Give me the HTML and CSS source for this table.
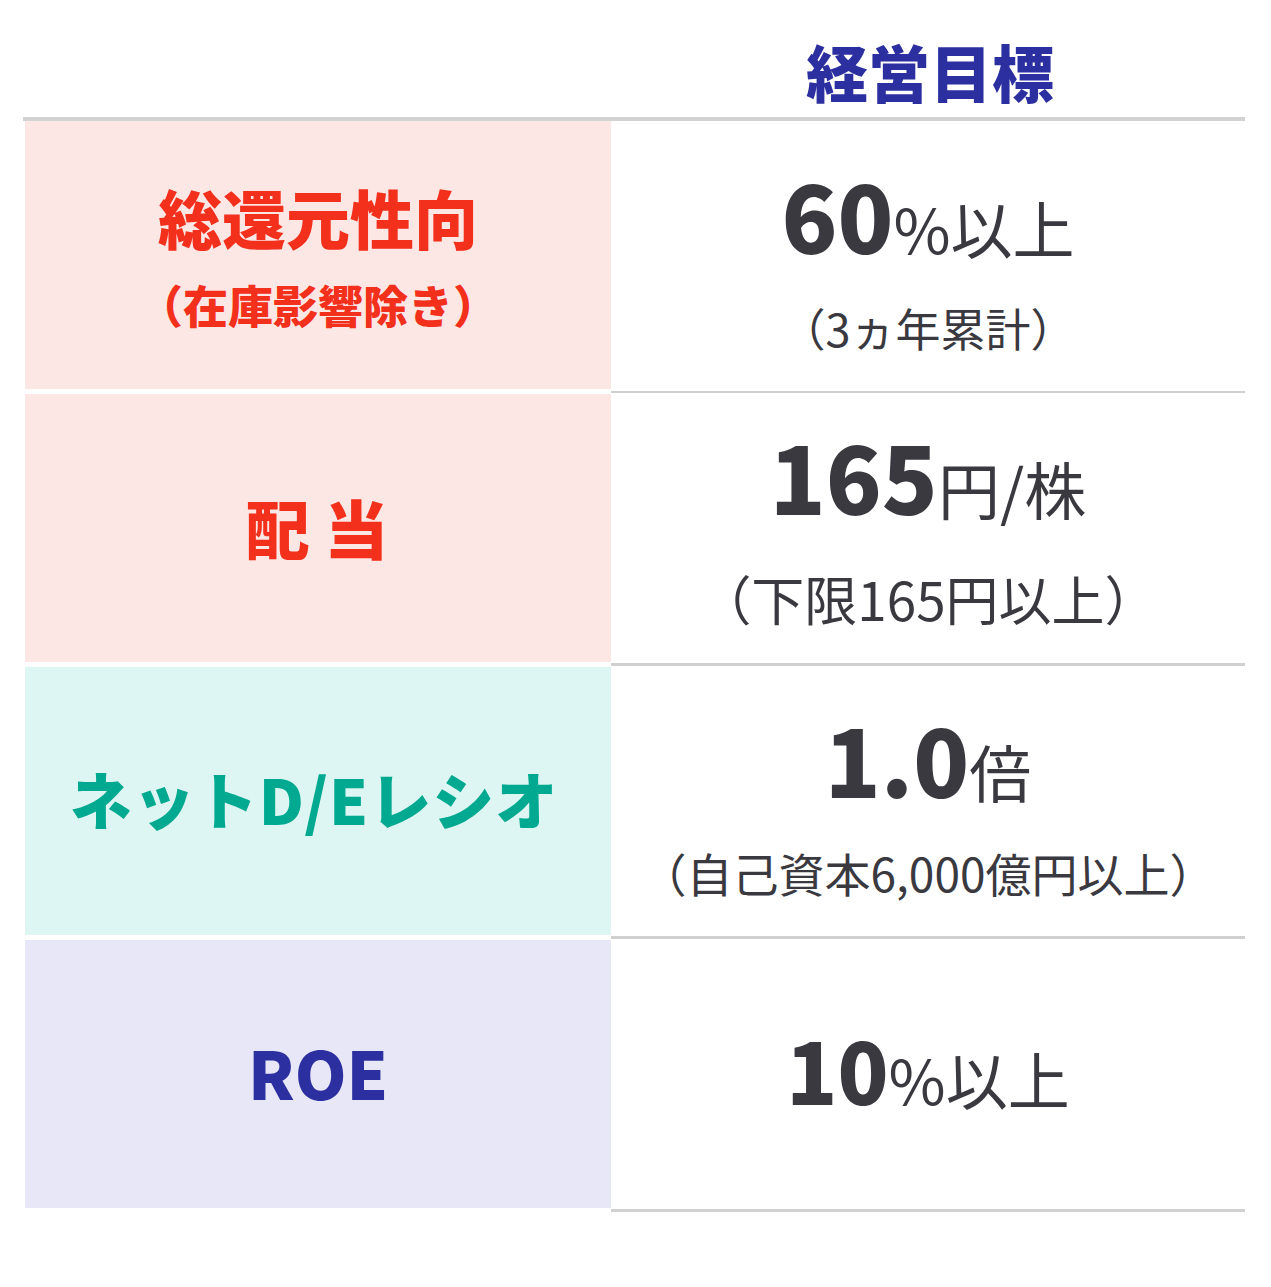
FILE: index.html
```html
<!DOCTYPE html>
<html lang="ja">
<head>
<meta charset="utf-8">
<title>経営目標</title>
<link rel="stylesheet" href="styles.css">
</head>
<body>
<div class="board">
  <div class="head">
    <div class="head-blank"></div>
    <div class="head-title">経営目標</div>
  </div>

  <div class="row">
    <div class="label label-red">
      <div class="label-main">総還元性向</div>
      <div class="label-sub">（在庫影響除き）</div>
    </div>
    <div class="value value-1">
      <div class="value-main"><span class="num">60</span><span class="unit">%以上</span></div>
      <div class="value-sub sub-1">（3ヵ年累計）</div>
    </div>
  </div>

  <div class="row">
    <div class="label label-red">
      <div class="label-main label-haito">配 当</div>
    </div>
    <div class="value value-2">
      <div class="value-main"><span class="num">165</span><span class="unit">円/株</span></div>
      <div class="value-sub sub-2">（下限165円以上）</div>
    </div>
  </div>

  <div class="row">
    <div class="label label-teal">
      <div class="label-main label-kana">ネットD/Eレシオ</div>
    </div>
    <div class="value value-3">
      <div class="value-main"><span class="num">1.0</span><span class="unit">倍</span></div>
      <div class="value-sub sub-3">（自己資本6,000億円以上）</div>
    </div>
  </div>

  <div class="row">
    <div class="label label-navy">
      <div class="label-main label-roe">ROE</div>
    </div>
    <div class="value value-4">
      <div class="value-main"><span class="num num-small">10</span><span class="unit">%以上</span></div>
    </div>
  </div>
</div>
</body>
</html>
```

FILE: styles.css
```css
* {
  box-sizing: border-box;
}

html, body {
  margin: 0;
  padding: 0;
  background: #ffffff;
}

body {
  font-family: "Noto Sans CJK JP", "Noto Sans", sans-serif;
  color: #3a393f;
}

.board {
  width: 1245px;
  padding-left: 23px;
}

.head {
  display: grid;
  grid-template-columns: 588px 634px;
  height: 121px;
  border-bottom: 4px solid #d2d2d2;
}

.head-title {
  padding-top: 40px;
  padding-left: 4px;
  text-align: center;
  font-size: 62px;
  line-height: 1;
  font-weight: 900;
  color: #2b2f9f;
}

.row {
  display: grid;
  grid-template-columns: 588px 634px;
  height: 273px;
}

.label {
  margin-left: 2px;
  height: 268px;
  display: flex;
  flex-direction: column;
  align-items: center;
  justify-content: center;
  gap: 34px;
  font-weight: 900;
}

.label-red {
  background: #fde7e5;
  color: #f2301c;
}

.label-teal {
  background: #ddf6f3;
  color: #00a98f;
}

.label-navy {
  background: #e8e7f7;
  color: #2b2f9f;
}

.label-main {
  font-size: 64px;
  line-height: 1;
  white-space: nowrap;
}

.label-sub {
  font-size: 45px;
  line-height: 1;
  white-space: nowrap;
}

.label-haito {
  font-size: 64px;
  margin-top: -4px;
  margin-left: -2px;
}

.label-kana {
  font-size: 62px;
  letter-spacing: 1px;
  margin-left: -8px;
  margin-top: -6px;
}

.label-roe {
  font-size: 66px;
  margin-top: -6px;
}

.value {
  height: 272px;
  border-bottom: 3px solid #d0d0d0;
  display: flex;
  flex-direction: column;
  align-items: center;
  justify-content: flex-start;
}

.value-1 {
  border-bottom-width: 2px;
  padding-top: 47px;
}

.value-2 {
  padding-top: 35px;
}

.value-3 {
  padding-top: 45px;
}

.value-4 {
  padding-top: 87px;
}

.value-main {
  line-height: 1;
  white-space: nowrap;
}

.num {
  font-size: 92px;
  font-weight: 900;
}

.num-small {
  font-size: 84px;
}

.unit {
  font-size: 62px;
  font-weight: 400;
}

.value-sub {
  line-height: 1;
  font-weight: 400;
  white-space: nowrap;
}

.sub-1 {
  font-size: 45px;
  margin-top: 45px;
}

.sub-2 {
  font-size: 53px;
  margin-top: 51px;
}

.sub-3 {
  font-size: 46px;
  margin-top: 45px;
}
```
